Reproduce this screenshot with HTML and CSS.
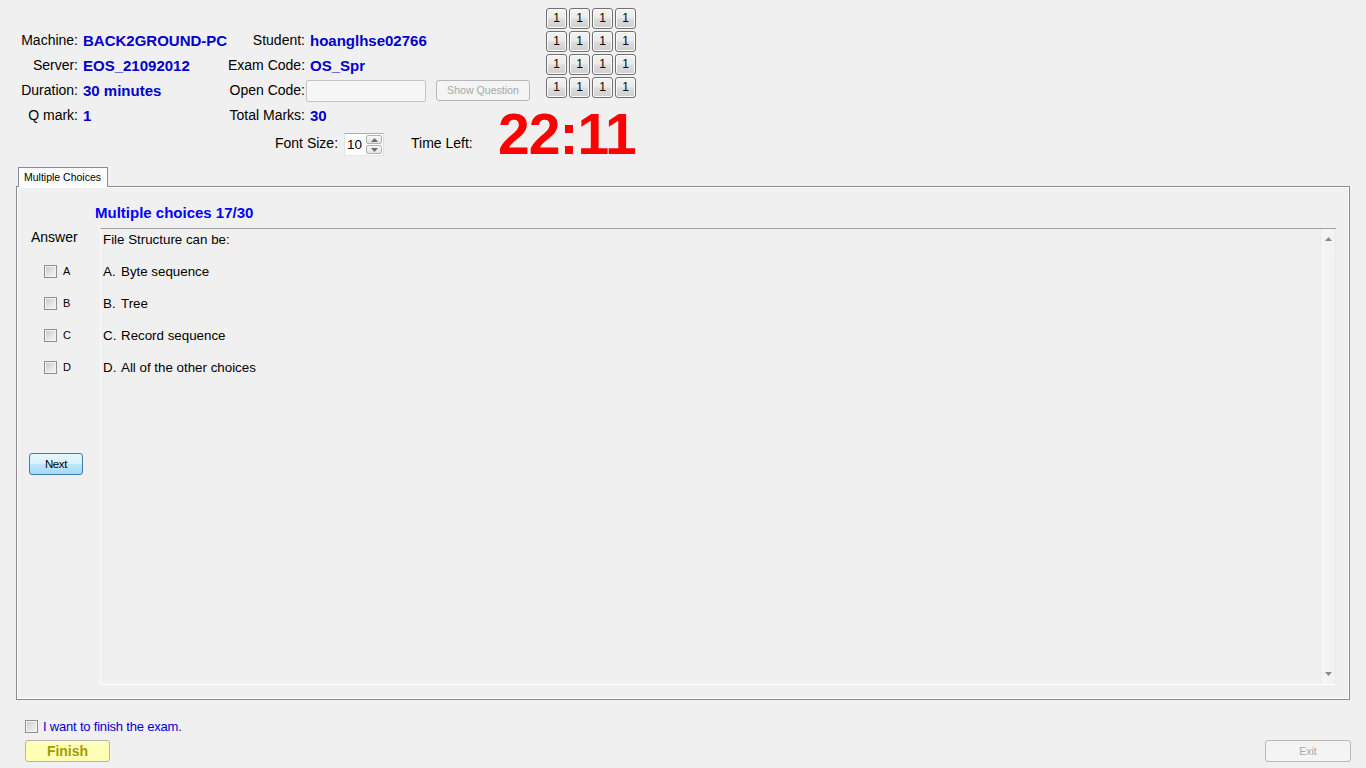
FILE: index.html
```html
<!DOCTYPE html>
<html lang="en">
<head>
<meta charset="utf-8">
<title>EOS Exam Client</title>
<link rel="stylesheet" href="styles.css">
</head>
<body>
<header class="top">
  <div class="info r1">
    <span class="lbl">Machine:</span><span class="val">BACK2GROUND-PC</span>
    <span class="lbl">Student:</span><span class="val">hoanglhse02766</span>
  </div>
  <div class="info r2">
    <span class="lbl">Server:</span><span class="val">EOS_21092012</span>
    <span class="lbl">Exam Code:</span><span class="val">OS_Spr</span>
  </div>
  <div class="info r3">
    <span class="lbl">Duration:</span><span class="val">30 minutes</span>
    <span class="lbl">Open Code:</span>
    <span class="val opencell"><span class="textbox"></span><span class="btn disabled showq">Show Question</span></span>
  </div>
  <div class="info r4">
    <span class="lbl">Q mark:</span><span class="val">1</span>
    <span class="lbl">Total Marks:</span><span class="val">30</span>
  </div>
  <div class="qgrid">
    <span class="qbtn">1</span><span class="qbtn">1</span><span class="qbtn">1</span><span class="qbtn">1</span>
    <span class="qbtn">1</span><span class="qbtn">1</span><span class="qbtn">1</span><span class="qbtn">1</span>
    <span class="qbtn">1</span><span class="qbtn">1</span><span class="qbtn">1</span><span class="qbtn">1</span>
    <span class="qbtn">1</span><span class="qbtn">1</span><span class="qbtn">1</span><span class="qbtn">1</span>
  </div>
  <div class="fontrow">
    <span class="flabel">Font Size:</span>
    <span class="spin">
      <span class="spinval">10</span>
      <span class="spinbtns">
        <span class="spinbtn"><svg width="7" height="4" viewBox="0 0 7 4"><path d="M0 4 L3.5 0 L7 4 Z" fill="#6d6d6d"/></svg></span>
        <span class="spinbtn"><svg width="7" height="4" viewBox="0 0 7 4"><path d="M0 0 L3.5 4 L7 0 Z" fill="#6d6d6d"/></svg></span>
      </span>
    </span>
    <span class="tlabel">Time Left:</span>
  </div>
  <div class="timer">22:11</div>
</header>

<section class="tabs">
  <div class="tabstrip"><div class="tab">Multiple Choices</div></div>
  <div class="panel">
    <h2 class="qtitle">Multiple choices 17/30</h2>
    <div class="qbody">
      <div class="answers">
        <div class="anslabel">Answer</div>
        <div class="opts">
          <div class="opt"><span class="chk"></span><span class="optl">A</span></div>
          <div class="opt"><span class="chk"></span><span class="optl">B</span></div>
          <div class="opt"><span class="chk"></span><span class="optl">C</span></div>
          <div class="opt"><span class="chk"></span><span class="optl">D</span></div>
        </div>
        <span class="btn next">Next</span>
      </div>
      <div class="qbox">
        <div class="qtext">
          <p>File Structure can be:</p>
          <p><span class="letter">A.</span>Byte sequence</p>
          <p><span class="letter">B.</span>Tree</p>
          <p><span class="letter">C.</span>Record sequence</p>
          <p><span class="letter">D.</span>All of the other choices</p>
        </div>
        <div class="vscroll">
          <span class="arrow"><svg width="7" height="4" viewBox="0 0 7 4"><path d="M0 4 L3.5 0 L7 4 Z" fill="#8a8a8a"/></svg></span>
          <span class="arrow"><svg width="7" height="4" viewBox="0 0 7 4"><path d="M0 0 L3.5 4 L7 0 Z" fill="#8a8a8a"/></svg></span>
        </div>
      </div>
    </div>
  </div>
</section>

<footer class="footer">
  <div class="finishrow"><span class="chk"></span><span class="finishtext">I want to finish the exam.</span></div>
  <div class="btnrow">
    <span class="btn finish">Finish</span>
    <span class="btn disabled exit">Exit</span>
  </div>
</footer>
</body>
</html>
```

FILE: styles.css
```css
html, body {
  margin: 0;
  padding: 0;
}
body {
  background: #f0f0f0;
  font-family: "Liberation Sans", Arial, sans-serif;
  color: #000;
  width: 1366px;
  height: 768px;
  overflow: hidden;
}

/* ---------- header ---------- */
.top {
  display: grid;
  grid-template-columns: 15px 63px 150px 77px 241px 90px;
  grid-template-rows: 20px 25px 25px 25px 25px 30px;
  padding-top: 8px;
}
.info { display: contents; }
.info > :nth-child(1) { grid-column: 2; }
.info > :nth-child(2) { grid-column: 3; }
.info > :nth-child(3) { grid-column: 4; }
.info > :nth-child(4) { grid-column: 5; }
.r1 > * { grid-row: 2; }
.r2 > * { grid-row: 3; }
.r3 > * { grid-row: 4; }
.r4 > * { grid-row: 5; }

.lbl {
  font-size: 14px;
  line-height: 25px;
  text-align: right;
  white-space: nowrap;
}
.val {
  font-size: 15px;
  font-weight: bold;
  color: #0000cd;
  line-height: 25px;
  padding-left: 5px;
  white-space: nowrap;
}
.opencell {
  display: flex;
  align-items: center;
  padding-left: 1px;
  gap: 10px;
}
.textbox {
  width: 120px;
  height: 22px;
  box-sizing: border-box;
  border: 1px solid #c4c4c4;
  border-radius: 2px;
  background: #f6f6f6;
}
.btn {
  display: flex;
  align-items: center;
  justify-content: center;
  box-sizing: border-box;
  border-radius: 3px;
  white-space: nowrap;
}
.btn.disabled {
  border: 1px solid #b7b7b7;
  background: #f4f4f4;
  color: #a8a8a8;
  font-weight: normal;
}
.showq {
  width: 94px;
  height: 21px;
  font-size: 10.6px;
}

.qgrid {
  grid-column: 6;
  grid-row: 1 / 6;
  align-self: start;
  display: grid;
  grid-template-columns: repeat(4, 21px);
  grid-auto-rows: 21px;
  gap: 2px;
}
.qbtn {
  box-sizing: border-box;
  border: 1px solid #707070;
  border-radius: 3px;
  background: linear-gradient(#f3f3f3 0%, #ebebeb 48%, #dddddd 52%, #cfcfcf 100%);
  box-shadow: inset 0 0 0 1px #fbfbfb;
  font-size: 12px;
  line-height: 19px;
  text-align: center;
}

.fontrow {
  grid-column: 4 / 6;
  grid-row: 6;
  display: flex;
  align-items: center;
  padding-left: 47px;
  font-size: 14px;
}
.spin {
  margin-left: 6px;
  width: 40px;
  height: 23px;
  box-sizing: border-box;
  border: 1px solid #abadb3;
  border-color: #abadb3 #dbdfe6 #e3e9ef #e2e3ea;
  background: #fff;
  display: flex;
  align-items: center;
  justify-content: space-between;
  margin-top: 3px;
}
.spinval {
  font-size: 13.5px;
  padding-left: 2px;
}
.spinbtns {
  display: flex;
  flex-direction: column;
  width: 16px;
  height: 19px;
  margin-right: 1px;
  gap: 1px;
}
.spinbtn {
  flex: 1;
  display: flex;
  align-items: center;
  justify-content: center;
  box-sizing: border-box;
  border: 1px solid #b3b3b3;
  border-radius: 2px;
  background: linear-gradient(#f7f7f7, #e3e3e3);
}
.tlabel {
  margin-left: 27px;
}
.timer {
  grid-column: 5 / 7;
  grid-row: 5 / 7;
  justify-self: start;
  align-self: start;
  margin-top: 3px;
  margin-left: 193px;
  font-size: 57px;
  line-height: 57px;
  font-weight: bold;
  color: #ff0000;
  letter-spacing: -1px;
  white-space: nowrap;
}

/* ---------- tab control ---------- */
.tabs {
  margin: 9px 16px 0 16px;
}
.tabstrip {
  display: flex;
  height: 20px;
}
.tab {
  position: relative;
  z-index: 1;
  margin-left: 2px;
  width: 90px;
  height: 20px;
  box-sizing: border-box;
  border: 1px solid #898c95;
  border-bottom: none;
  background: #fcfcfc;
  font-size: 10.5px;
  line-height: 18px;
  padding-left: 5px;
  white-space: nowrap;
}
.panel {
  margin-top: -1px;
  height: 514px;
  box-sizing: border-box;
  border: 1px solid #898c95;
  box-shadow: inset 0 0 0 1px #ffffff;
  padding: 17px 13px 14px 0;
  background: #f0f0f0;
}
.qtitle {
  margin: 0;
  padding-left: 78px;
  font-size: 15px;
  line-height: 17px;
  font-weight: bold;
  color: #0000ff;
}
.qbody {
  margin-top: 7px;
  height: 457px;
  display: flex;
}
.answers {
  width: 83px;
  flex: none;
  display: flex;
  flex-direction: column;
}
.anslabel {
  margin-top: 1px;
  padding-left: 14px;
  font-size: 14px;
  line-height: 16px;
}
.opts {
  margin-top: 10px;
}
.opt {
  height: 32px;
  display: flex;
  align-items: center;
  padding-left: 27px;
}
.chk {
  display: inline-block;
  width: 13px;
  height: 13px;
  box-sizing: border-box;
  border: 1px solid #8e8f8f;
  background: linear-gradient(135deg, #c9c9c9 0%, #e6e6e6 60%, #f7f7f7 100%);
  box-shadow: inset 0 0 0 1px #f4f4f4;
  flex: none;
}
.optl {
  margin-left: 6px;
  font-size: 11px;
}
.next {
  margin-top: 70px;
  margin-left: 12px;
  width: 54px;
  height: 22px;
  border: 1px solid #3c7fb1;
  background: linear-gradient(#eaf6fd 0%, #d9f0fc 48%, #bee6fd 52%, #a7d9f5 100%);
  font-size: 11.5px;
  letter-spacing: -0.4px;
}
.qbox {
  flex: 1;
  display: flex;
  border-top: 1px solid #a0a0a0;
  border-left: 1px solid #fbfbfb;
  border-bottom: 1px solid #ffffff;
}
.qtext {
  flex: 1;
  padding: 3px 0 0 2px;
  font-size: 13.33px;
  line-height: 16px;
}
.qtext p {
  margin: 0 0 16px 0;
}
.letter {
  display: inline-block;
  width: 18px;
}
.vscroll {
  width: 16px;
  flex: none;
  display: flex;
  flex-direction: column;
  justify-content: space-between;
  background: linear-gradient(90deg, #e9e9e9 0px, #f5f5f5 2px, #f2f2f2 14px, #e9e9e9 16px);
}
.arrow {
  height: 20px;
  display: flex;
  align-items: center;
  justify-content: center;
}

/* ---------- footer ---------- */
.footer {
  padding: 0 15px 0 25px;
}
.finishrow {
  margin-top: 18px;
  height: 16px;
  display: flex;
  align-items: center;
}
.finishtext {
  margin-left: 5px;
  font-size: 13px;
  color: #0000cd;
  letter-spacing: -0.2px;
}
.btnrow {
  margin-top: 6px;
  display: flex;
  justify-content: space-between;
}
.finish {
  width: 85px;
  height: 22px;
  border: 1px solid #b5b5b5;
  background: #ffffb8;
  color: #a09c00;
  font-weight: bold;
  font-size: 14px;
}
.exit {
  width: 86px;
  height: 22px;
  font-size: 10.5px;
}
```
